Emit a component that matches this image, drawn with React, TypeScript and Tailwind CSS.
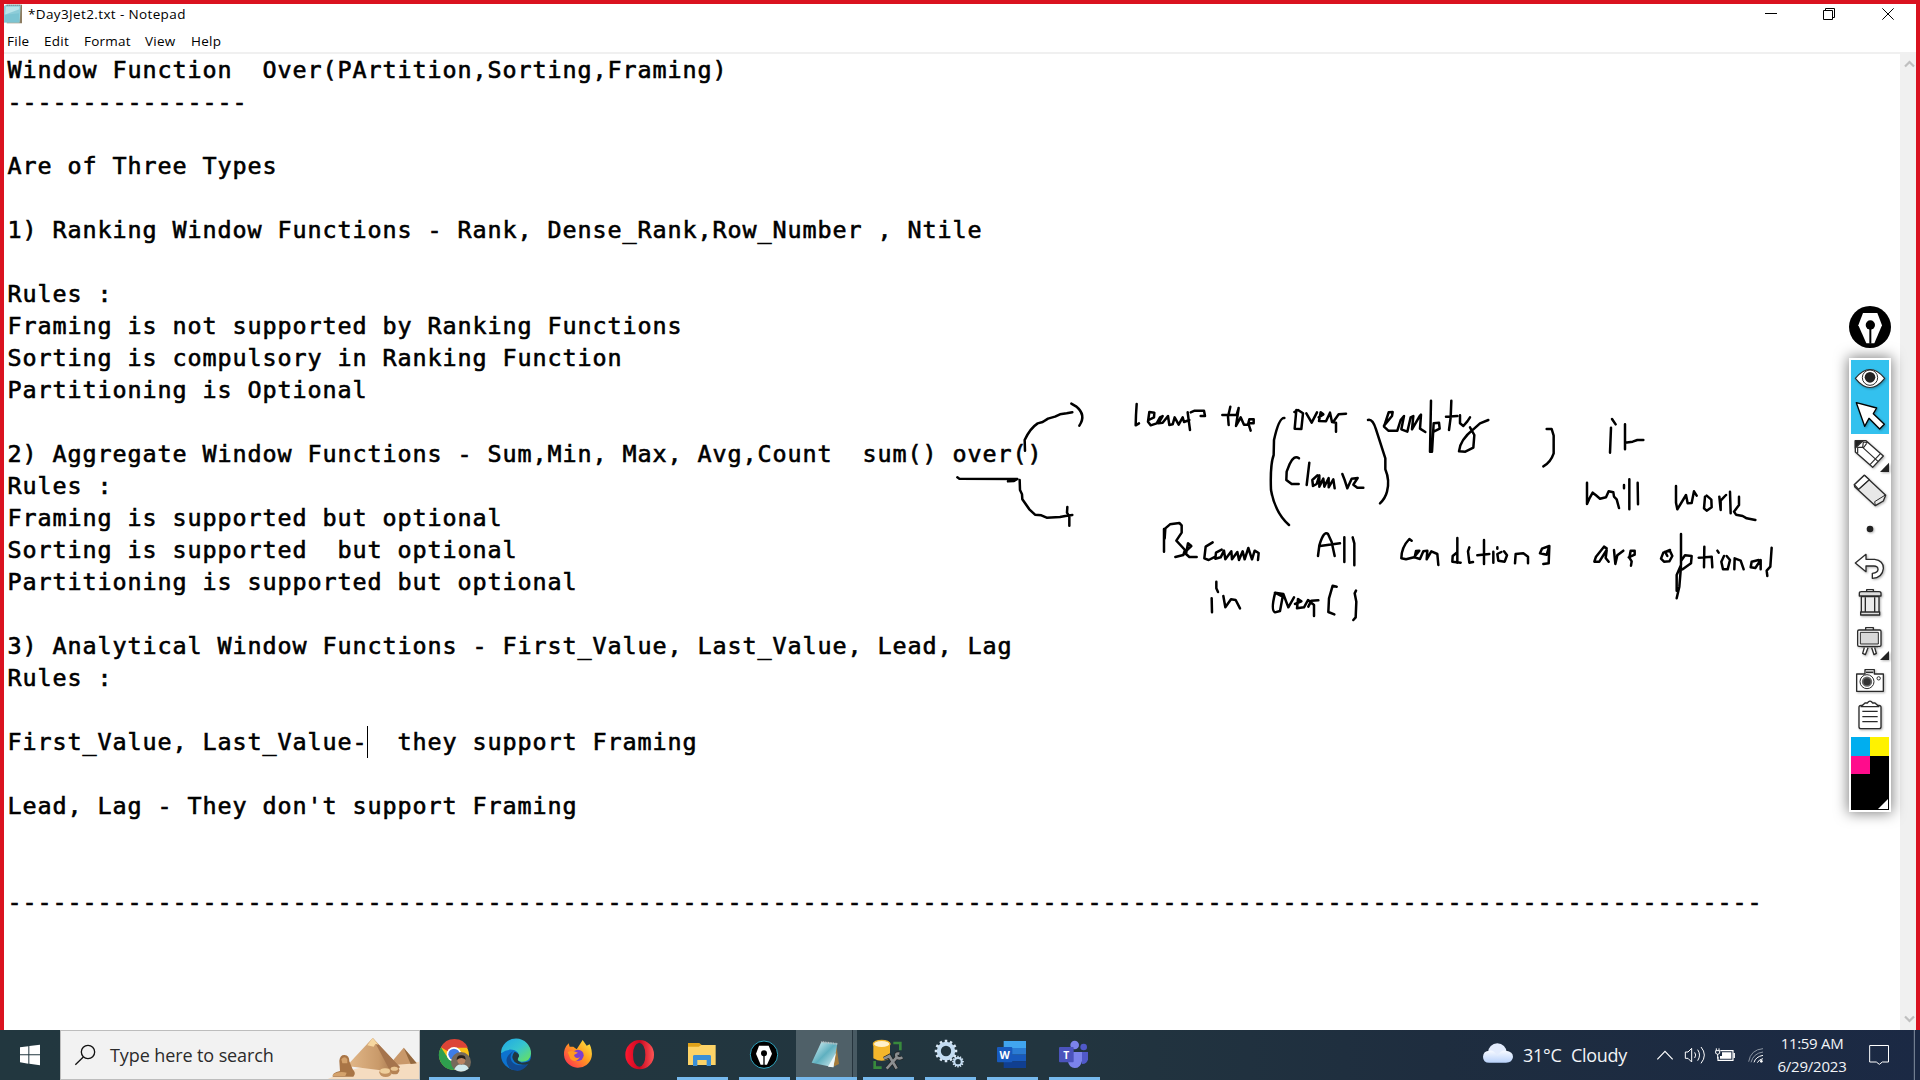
import type { ReactNode } from "react";

const lines = [
  "Window Function  Over(PArtition,Sorting,Framing)",
  "----------------",
  "",
  "Are of Three Types",
  "",
  "1) Ranking Window Functions - Rank, Dense_Rank,Row_Number , Ntile",
  "",
  "Rules :",
  "Framing is not supported by Ranking Functions",
  "Sorting is compulsory in Ranking Function",
  "Partitioning is Optional",
  "",
  "2) Aggregate Window Functions - Sum,Min, Max, Avg,Count  sum() over()",
  "Rules :",
  "Framing is supported but optional",
  "Sorting is supported  but optional",
  "Partitioning is supported but optional",
  "",
  "3) Analytical Window Functions - First_Value, Last_Value, Lead, Lag",
  "Rules :",
  "",
  "First_Value, Last_Value-|  they support Framing",
  "",
  "Lead, Lag - They don't support Framing",
  "",
  "",
  "-".repeat(117),
];

function TitleBar() {
  return (
    <header className="flex h-[26px] shrink-0 items-start bg-white">
      <svg className="h-5 w-[18px] shrink-0" viewBox="12 12 54 60">
        <path d="M22 14h44v56H20z" fill="#8d7d62" />
        <path d="M18 14h44l-3 54H12V18z" fill="#8fd0dc" />
        <path d="M18 20h40l-1 20-42 4z" fill="#b9e4ea" />
        <path d="M14 44l44-16-1 38H13z" fill="#6fbccb" opacity=".6" />
        <path d="M20 16h42" stroke="#777" strokeWidth="4" strokeDasharray="3 3" />
      </svg>
      <span className="ml-[6px] font-['Open_Sans',sans-serif] text-[13.5px] leading-[21px] tracking-[0.37px] text-black">
        *Day3Jet2.txt - Notepad
      </span>
      <svg className="ml-auto h-[26px] w-[158px]" viewBox="174 12 474 78" fill="none" stroke="#000" strokeWidth="3">
        <path d="M195 40.500h36" />
        <path d="M370.500 31.500h27v27h-27zM376.500 31v-5.500h27v27h-5" />
        <path d="M547 25l34 34M581 25l-34 34" />
      </svg>
    </header>
  );
}

function MenuBar() {
  return (
    <nav className="flex h-[24px] shrink-0 border-b-2 border-[#f0f0f0] bg-white pl-[3px] font-['Open_Sans',sans-serif] text-[13.5px] leading-[23px] tracking-[0.25px] text-black">
      <span className="w-[37px]">File</span>
      <span className="w-[40px]">Edit</span>
      <span className="w-[61px]">Format</span>
      <span className="w-[46px]">View</span>
      <span>Help</span>
    </nav>
  );
}

function Document() {
  return (
    <main className="min-w-0 flex-1 overflow-hidden bg-white pl-[3.5px] font-['DejaVu_Sans_Mono',monospace] text-[23.4px] leading-8 tracking-[0.917px] text-black [-webkit-text-stroke:0.6px_#000]">
      {lines.map((line, i) => {
        const [before, after] = line.split("|");
        return (
          <div key={i} className="h-8 whitespace-pre">
            {before}
            {after !== undefined && <span className="-mr-px inline-block h-8 w-px bg-black align-top" />}
            {after}
          </div>
        );
      })}
    </main>
  );
}

function ScrollBar() {
  return (
    <aside className="flex w-4 shrink-0 flex-col justify-between bg-[#f0f0f0] py-[6px]">
      <svg className="h-[9px] w-4" viewBox="0 0 16 9" fill="none" stroke="#bfbfbf" strokeWidth="2.200">
        <path d="M5 6.500l4.500-4.500L14 6.500" />
      </svg>
      <svg className="h-[9px] w-4" viewBox="0 0 16 9" fill="none" stroke="#bfbfbf" strokeWidth="2.200">
        <path d="M5 1.500L9.500 6 14 1.500" />
      </svg>
    </aside>
  );
}

function Ink() {
  return (
    <svg
      className="pointer-events-none absolute left-[940px] top-[380px] h-[260px] w-[860px]"
      viewBox="0 0 2580 780"
      fill="none"
      stroke="#000"
      strokeWidth="7.500"
      strokeLinecap="round"
      strokeLinejoin="round"
    >
      <path d="M255 212L254 180Q270 145 293 130L308 126L324 116L345 110L360 103L380 100L397 97M394 71L408 79Q440 105 418 137" />
      <path d="M52 292L58 296L232 297L222 303L204 304M239 300L240 330L246 343L247 358L268 388L285 404L304 406L320 413L360 411L376 408L397 405M382 381L381 398L388 410V437" />
      <path d="M590 72L588 105L587 136L597 130M626 120L642 112L643 98L628 96L624 125L632 136L650 130L660 112L668 108L655 130L668 128L684 108L688 135L698 133L704 112L716 134L728 112L732 126L748 120M743 97L750 150M752 97L764 92H792L795 108H782" />
      <path d="M871 80L864 110L866 135M847 105L890 104L896 84L888 138L902 112L912 134L924 134L928 118L941 118V130L925 130L932 152" />
      <path d="M1033 114Q1017 112 1002 180L1001 225Q990 255 993 330Q1005 398 1047 435" />
      <path d="M1069 90L1064 146L1084 147L1089 100L1074 90L1063 96M1099 100L1115 128L1131 97M1136 112L1150 103L1142 97L1137 123L1158 124L1170 98L1176 126L1188 128V155M1180 125L1196 103L1218 101" />
      <path d="M1077 235Q1062 224 1049 252L1040 275L1039 300L1055 312H1076M1108 248L1100 315M1132 286L1117 300L1119 318L1130 312L1138 286V320L1150 296L1153 320L1166 294V322L1180 298L1184 325M1207 282L1214 300L1222 325L1235 296L1253 294L1240 314L1252 323H1270" />
      <path d="M672 447V515M674 475L676 445L690 433L718 429L725 436V458L709 482L735 510L730 525L706 531M738 513L754 498L744 490L738 522L748 531H770M818 487L797 500L793 535L806 540L826 530M845 509L828 518L826 536L842 532L852 512L856 538L874 514L876 538L892 516L897 540L908 514L914 538L925 504L936 538L944 512L956 519L954 540" />
      <path d="M1134 528L1138 496Q1152 450 1164 462L1175 486L1184 528M1140 498L1200 490M1213 472V546M1238 472L1243 490V556" />
      <path d="M829 605V625L834 636M815 655L816 697M850 648L856 682L873 658L887 660L900 685" />
      <path d="M1005 640Q992 692 1005 697L1020 693L1028 650L1005 638L1030 642L1045 682L1062 652M1065 672L1084 664L1074 657L1071 685L1092 682L1104 660L1122 675V708M1105 680L1114 662L1135 661M1190 620L1178 617L1167 655L1165 696L1183 703M1248 632L1244 640L1249 665L1247 712L1240 720" />
      <g transform="translate(1200 0)">
        <path d="M84 120Q98 116 108 148L136 235V268Q150 302 141 335Q136 355 120 370" />
        <path d="M132 137L156 108L158 96L146 97L132 140L145 152H172L182 120L192 108L184 148L202 155L212 112L220 108L216 148L238 110L243 104L240 146L256 156M273 62L270 215H276L281 130L297 128L299 146L281 155" />
        <path d="M334 62L332 112L327 150M318 110L352 108M360 106V130L370 138L382 124L390 112M390 142L403 165L400 203L376 215L357 214Q360 180 400 148L420 130L445 120" />
        <path d="M620 147H635L641 167V220Q632 247 610 259M816 117L827 133M813 143L810 218M855 133V208M855 188L878 185L892 180H910" />
        <path d="M741 308V372L748 356L758 338L768 346L780 356L798 352L806 334L820 337L822 350L830 358L837 384M852 315V325M868 298V388M893 308L894 373" />
        <path d="M1008 318V368L1012 388L1038 345L1043 370L1055 369L1062 334L1070 347M1095 350L1092 385L1100 392L1115 382L1114 359L1100 347M1138 350L1142 390V362L1158 345M1170 335L1172 400M1197 350V375L1182 395L1188 404L1208 408L1220 415L1246 420" />
        <path d="M215 482L208 477Q184 502 184 535L198 538L222 532L238 512L228 513L224 532L240 537L250 514L262 512L260 538L274 514L292 522L295 555" />
        <path d="M352 474V548M350 518L338 528L337 545L362 548M388 502L384 514L388 548L399 546M432 480V552M412 526L448 522M460 515V548M472 502V506M484 516L472 522L475 542L494 545L501 526L492 514M525 550L527 522L550 520L564 530V550M628 498L606 506L600 520L620 524L628 498L626 550L610 552" />
        <path d="M800 505L792 500L768 530L763 545L778 545L800 510L797 534L806 545M822 510L826 552L832 526L850 512M866 532L884 524V512L872 512L868 533L875 544L873 557" />
        <path d="M990 510L970 518L963 536L972 545L988 544L997 528L990 513L975 515L982 528M1023 462V555L1010 585V632M1023 560L1018 620L1010 655M1025 540L1035 526L1055 528L1053 550L1028 568" />
        <path d="M1093 500L1092 562M1076 533L1115 530L1117 562M1132 512L1136 518M1152 528L1144 545L1149 568L1163 568L1170 540L1160 528M1183 568L1184 535L1202 542L1211 568M1256 540L1235 545L1232 562L1246 564L1262 540V568M1295 503L1291 560L1280 572L1282 588" />
      </g>
    </svg>
  );
}

function Tool({ box, size, children }: { box: string; size: string; children: ReactNode }) {
  return (
    <svg
      className={`w-[38px] shrink-0 drop-shadow-[1px_1px_1px_rgba(0,0,0,0.3)] ${size}`}
      viewBox={box}
      fill="#fff"
      stroke="#2b2b2b"
      strokeWidth="4"
      strokeLinejoin="round"
    >
      {children}
    </svg>
  );
}

function PenToolbar() {
  return (
    <div className="absolute left-[1849px] top-[306px] flex w-[42px] flex-col">
      <svg className="mb-[10px] h-[42px] w-[42px]" viewBox="0 0 126 126">
        <circle cx="63" cy="63" r="63" fill="#000" />
        <path d="M42 21H85L99 58L76 112H52L28 58z" fill="#fff" />
        <circle cx="64" cy="57" r="14" />
        <path d="M64 57v56" stroke="#000" strokeWidth="6" />
      </svg>
      <div className="flex h-[454px] flex-col bg-white p-[2px] shadow-[0_0_14px_1px_rgba(0,0,0,0.5)]">
        <div className="flex h-[74px] shrink-0 flex-col bg-[#33c1ee]">
          <Tool box="63 210 114 111" size="h-[37px]">
            <path d="M76 265Q120 212 164 265Q120 320 76 265z" strokeWidth="3.500" />
            <circle cx="120" cy="263" r="23" fill="#fff" strokeWidth="3" />
            <circle cx="120" cy="262" r="16" fill="#222" stroke="none" />
          </Tool>
          <Tool box="63 321 114 111" size="h-[37px]">
            <path d="M79 338L140 354L130 371L163 403L149 417L117 385L104 409z" stroke="#000" />
          </Tool>
        </div>
        <Tool box="63 432 114 114" size="h-[38px]">
          <path d="M76 452H108L160 498L128 532L76 486z" />
          <path d="M76 452H99L76 474z" fill="#222" />
          <path d="M83 490V472H98L100 456L115 458M98 472L144 514M152 490L120 524M100 474L110 460" fill="none" strokeWidth="3.500" />
          <path d="M177 518V546H150z" fill="#222" stroke="none" />
        </Tool>
        <Tool box="63 546 114 114" size="h-[38px]">
          <path d="M73 584L103 556L167 616L160 633L136 647L74 590z" fill="#e8e8e8" />
          <path d="M73 584L103 556L118 569L86 598z" fill="#fff" />
          <path d="M86 598L118 569M134 635L136 646M134 635L166 615" strokeWidth="3" />
        </Tool>
        <Tool box="63 660 114 111" size="h-[37px]">
          <circle cx="120" cy="717" r="10" fill="#222" stroke="none" />
        </Tool>
        <Tool box="63 -9 114 111" size="h-[37px]">
          <path d="M76 39L108 13V28H134Q161 32 160 56Q157 84 127 85V70Q145 68 144 57Q143 48 132 48H108V65z" />
        </Tool>
        <Tool box="63 102 114 111" size="h-[37px]">
          <path d="M110 126V119H130V126" />
          <rect x="94" y="140" width="53" height="53" fill="#ececec" />
          <path d="M88 138V130Q88 125 94 125H147Q153 125 153 130V138z" fill="#ddd" />
          <path d="M106 142V184M134 142V184M92 186H149V195H92z" fill="#ddd" />
        </Tool>
        <Tool box="63 213 114 117" size="h-[39px]">
          <path d="M107 240V233H130V240M103 293L98 310L106 314L114 293M125 293L132 314L139 310L134 293M94 290H144" />
          <rect x="83" y="240" width="70" height="49" rx="4" />
          <rect x="91" y="247" width="54" height="35" fill="#d8d8d8" strokeWidth="3" />
          <path d="M177 303V330H150z" fill="#222" stroke="none" />
        </Tool>
        <Tool box="63 330 114 111" size="h-[37px]">
          <path d="M80 372H105V359H133V372H160V424H80z" />
          <path d="M108 367H130" strokeWidth="5" />
          <circle cx="111" cy="395" r="21" strokeWidth="3" />
          <circle cx="111" cy="395" r="13" fill="#333" strokeWidth="5" stroke="#666" />
          <circle cx="146" cy="385" r="5" strokeWidth="3" />
        </Tool>
        <Tool box="63 441 114 120" size="h-[40px]">
          <path d="M93 466H147Q153 466 153 472V530Q153 536 147 536H93Q87 536 87 530V472Q87 466 93 466z" />
          <path d="M93 470L105 459H112Q120 448 128 459H135L147 470z" />
          <path d="M97 484H143M97 500H143M97 515H143" />
        </Tool>
        <div className="relative grid h-[73px] shrink-0 grid-cols-2 grid-rows-[19px_18px_1fr] bg-black">
          <div className="bg-[#00aeef]" />
          <div className="bg-[#fff200]" />
          <div className="bg-[#ff0c8c]" />
          <svg className="absolute bottom-px right-px h-[10px] w-[10px]" viewBox="0 0 10 10">
            <path d="M10 0v10H0z" fill="#fff" />
          </svg>
        </div>
      </div>
    </div>
  );
}

function Slot({ x, bar, active, children }: { x: number; bar?: boolean; active?: boolean; children: ReactNode }) {
  return (
    <div className="relative flex h-[50px] w-[62px] shrink-0">
      {active && (
        <div className="absolute inset-y-0 left-0 flex w-[61px]">
          <div className="w-14 bg-[#4f6068]" />
          <div className="w-px bg-[#26343d]" />
          <div className="w-1 bg-[#485a63]" />
        </div>
      )}
      <svg className="relative h-[50px] w-[62px]" viewBox={`${x} 30 186 150`}>
        {children}
      </svg>
      {bar && <div className={`absolute bottom-0 h-[3px] bg-[#76b9ed] ${active ? "left-0 w-[61px]" : "left-[5px] w-[51px]"}`} />}
    </div>
  );
}

const gearTeeth = [0, 30, 60, 90, 120, 150, 180, 210, 240, 270, 300, 330];

function Gear({ cx, cy, r }: { cx: number; cy: number; r: number }) {
  return (
    <g transform={`translate(${cx} ${cy})`}>
      {gearTeeth.map((a) => (
        <rect key={a} x={-r * 0.14} y={-r * 1.25} width={r * 0.28} height={r * 0.5} fill="#dbe9f6" transform={`rotate(${a})`} />
      ))}
      <circle r={r * 0.8} fill="none" stroke="#c3dcf2" strokeWidth={r * 0.45} />
    </g>
  );
}

function TaskIcons() {
  return (
    <div className="ml-1 flex">
      <Slot x={12} bar>
        <circle cx="102" cy="105" r="45" fill="#fbc116" />
        <path d="M102 105L63 82A45 45 0 0 1 144 83H102z" fill="#dc4437" />
        <path d="M63 82A45 45 0 0 0 102 150L122 115H84z" fill="#2e9f4e" />
        <circle cx="102" cy="103" r="22" fill="#fff" />
        <circle cx="102" cy="103" r="17" fill="#3f7de8" />
        <circle cx="123" cy="126" r="30" fill="#75695c" />
        <path d="M103 148Q110 132 124 134Q140 132 146 146Q124 162 103 148z" fill="#cfe9ee" />
        <circle cx="124" cy="121" r="12" fill="#b98463" />
        <path d="M110 120Q110 105 124 106Q137 105 137 119Q124 108 110 120z" fill="#251f1c" />
      </Slot>
      <Slot x={198}>
        <defs>
          <linearGradient id="edgeTop" x1="0" y1="0" x2="1" y2="1">
            <stop offset="0" stopColor="#1fa6e6" />
            <stop offset=".5" stopColor="#36c5cf" />
            <stop offset="1" stopColor="#6de353" />
          </linearGradient>
        </defs>
        <circle cx="288" cy="105" r="45" fill="#0d73cf" />
        <path d="M243 100A45 45 0 0 1 333 101Q331 125 305 125Q288 124 294 113Q300 98 284 91Q262 84 243 100z" fill="url(#edgeTop)" />
        <path d="M281 92Q266 106 275 124Q288 143 325 132Q300 166 269 145Q245 115 281 92z" fill="#114a92" />
        <path d="M284 95Q304 101 294 115Q290 124 305 128Q330 126 333 116L327 131Q300 140 284 126Q270 110 284 95z" fill="#223740" />
      </Slot>
      <Slot x={384}>
        <defs>
          <linearGradient id="fox" x1="1" y1="0" x2="0" y2="1">
            <stop offset="0" stopColor="#fff044" />
            <stop offset=".45" stopColor="#ff9b20" />
            <stop offset="1" stopColor="#ff1e57" />
          </linearGradient>
        </defs>
        <path d="M432 105Q431 84 446 70L449 80L460 80L470 88L488 60L500 77L509 73Q518 92 515 110A42 42 0 0 1 432 105z" fill="url(#fox)" />
        <circle cx="474" cy="106" r="17" fill="#7b3fd0" />
        <path d="M443 96Q456 89 474 98L462 105Q465 118 480 112Q466 132 451 116z" fill="#ff9a22" />
      </Slot>
      <Slot x={570}>
        <defs>
          <linearGradient id="opera" x1="0" x2="1">
            <stop offset="0" stopColor="#ff1830" />
            <stop offset=".5" stopColor="#c90720" />
            <stop offset="1" stopColor="#ff5555" />
          </linearGradient>
        </defs>
        <path fillRule="evenodd" d="M659 60A43 44 0 1 0 659 148A43 44 0 1 0 659 60M658 68Q676 72 676 104Q676 136 658 140Q639 136 639 104Q639 72 658 68" fill="url(#opera)" />
      </Slot>
      <Slot x={756} bar>
        <path d="M804 69H838L846 76V86H804z" fill="#dfa21a" />
        <path d="M804 80H836L844 75H887V135H804z" fill="#fdd367" />
        <path d="M819 138V109Q819 105 824 105H868Q873 105 873 109V138H860V120H832V138z" fill="#3b8fd6" />
        <path d="M891 171h33v9h-33z" fill="#5389b8" />
      </Slot>
      <Slot x={942} bar>
        <circle cx="1032" cy="104" r="41" fill="#000" stroke="#2fa3bd" strokeWidth="3" />
        <path d="M1017 77H1046L1056 101L1041 134H1022L1008 101z" fill="#fff" />
        <circle cx="1032" cy="100" r="9" />
        <path d="M1032 100V135" stroke="#000" strokeWidth="4" />
      </Slot>
      <Slot x={-12} bar active>
        <defs>
          <linearGradient id="pad" x1="0" y1="0" x2="1" y2="1">
            <stop offset="0" stopColor="#e4f8fa" />
            <stop offset=".5" stopColor="#5fb0c0" />
            <stop offset="1" stopColor="#e2f2f4" />
          </linearGradient>
        </defs>
        <path d="M108 70L117 132L100 140z" fill="#a57b3b" />
        <path d="M64 66L112 70L100 142L35 128z" fill="url(#pad)" />
        <path d="M84 140L108 98L100 142z" fill="#eef7f8" />
        <path d="M64 66L112 72" stroke="#b9c1c4" strokeWidth="6" strokeDasharray="3 2" />
      </Slot>
      <Slot x={174} bar>
        <path d="M220 72V115Q245 130 270 115V72z" fill="#f4b62c" />
        <ellipse cx="245" cy="72" rx="25" ry="11" fill="#fff0cc" stroke="#f4b62c" strokeWidth="4" />
        <path d="M280 69H301V91M224 123V143H245" fill="none" stroke="#388a3c" strokeWidth="8" />
        <path d="M252 116L268 108L290 146M260 146L290 112Q285 98 298 101M290 112Q300 118 307 112" fill="none" stroke="#222" strokeWidth="12" />
        <path d="M252 116L268 108L290 146M260 146L290 112Q285 98 298 101M290 112Q300 118 307 112" fill="none" stroke="#8c8f91" strokeWidth="8" />
      </Slot>
      <Slot x={360} bar>
        <Gear cx={438} cy={93} r={27} />
        <Gear cx={474} cy={125} r={14} />
      </Slot>
      <Slot x={546} bar>
        <path d="M611 63H678V84H611z" fill="#41a5ee" />
        <path d="M611 84H678V104H611z" fill="#2b7cd3" />
        <path d="M611 104H678V124H611z" fill="#185abd" />
        <path d="M611 124H678V144H611z" fill="#103f91" />
        <rect x="591" y="81" width="46" height="46" rx="3" fill="#185abd" />
        <text x="614" y="116" textAnchor="middle" fontFamily="Open Sans, sans-serif" fontWeight="700" fontSize="32" fill="#fff">W</text>
      </Slot>
      <Slot x={732} bar>
        <circle cx="851" cy="81" r="10" fill="#5059c9" />
        <path d="M840 96H864V118Q862 132 846 132z" fill="#5059c9" />
        <circle cx="824" cy="75" r="13" fill="#7b83eb" />
        <path d="M805 96H846V122Q842 144 824 144Q808 143 804 125z" fill="#7b83eb" />
        <rect x="777" y="81" width="44" height="46" rx="3" fill="#4b53bc" />
        <text x="799" y="116" textAnchor="middle" fontFamily="Open Sans, sans-serif" fontWeight="700" fontSize="31" fill="#fff">T</text>
      </Slot>
    </div>
  );
}

function SearchBox() {
  return (
    <div className="flex h-[50px] w-[360px] shrink-0 items-center overflow-hidden border border-[#bdbdbd] bg-[#f2f2f2]">
      <svg className="h-12 w-[49px] shrink-0" viewBox="183 33 147 144" fill="none" stroke="#111" strokeWidth="4">
        <circle cx="264" cy="96" r="20" />
        <path d="M250 111L226 134" />
      </svg>
      <span className="w-[215px] whitespace-nowrap font-['Open_Sans',sans-serif] text-[18px] tracking-[-0.1px] text-[#2b2b2b]">
        Type here to search
      </span>
      <svg className="h-12 w-[94px] shrink-0" viewBox="975 33 282 144">
        <defs>
          <linearGradient id="stone" x1="0" x2="1">
            <stop offset="0" stopColor="#e3b98a" />
            <stop offset=".6" stopColor="#c99a6a" />
            <stop offset="1" stopColor="#9a6a45" />
          </linearGradient>
        </defs>
        <path d="M978 180Q1040 145 1110 140T1260 125V180z" fill="#f5dcc0" />
        <path d="M1211 83L1250 130L1190 134L1178 122z" fill="#c9986a" />
        <path d="M1211 83L1250 130L1232 132z" fill="#94683f" />
        <path d="M1118 54L1200 142L1160 153L1040 138z" fill="url(#stone)" />
        <path d="M1118 54L1200 142L1170 152z" fill="#a5744d" />
        <path d="M1118 54L1136 74L1126 72L1121 80L1102 76z" fill="#f6d7a0" />
        <path d="M1018 122Q1020 104 1034 105Q1048 106 1048 124L1058 148Q1070 160 1060 170H998Q996 158 1020 153z" fill="#a97546" />
        <path d="M1024 118Q1034 106 1042 118V130H1027zM1000 162Q1020 152 1040 158L1036 168H998z" fill="#d4a26c" />
        <ellipse cx="1157" cy="157" rx="19" ry="14" fill="#c29160" />
        <ellipse cx="1155" cy="153" rx="15" ry="8" fill="#efcf9c" />
        <ellipse cx="1184" cy="151" rx="14" ry="12" fill="#b58253" />
        <ellipse cx="1183" cy="146" rx="11" ry="6" fill="#e9c592" />
      </svg>
    </div>
  );
}

function Tray() {
  return (
    <div className="ml-auto flex h-[50px] font-['Open_Sans',sans-serif] text-[#f2f4f7]">
      <svg className="h-[50px] w-[40px]" viewBox="60 90 120 150">
        <defs>
          <linearGradient id="cloud" x1="0" y1="0" x2="0" y2="1">
            <stop offset="0" stopColor="#f7faff" />
            <stop offset="1" stopColor="#b9d2fb" />
          </linearGradient>
        </defs>
        <circle cx="112" cy="158" r="28" fill="#e3ecfd" />
        <path d="M88 188Q69 188 69 170Q70 152 88 152Q102 150 112 168Q122 150 138 152Q159 154 159 171Q157 188 138 188z" fill="url(#cloud)" />
      </svg>
      <span className="ml-[3px] w-[48px] whitespace-nowrap text-[18px] leading-[50px] tracking-[-0.3px]">31°C</span>
      <span className="w-[79px] whitespace-nowrap text-[18px] leading-[50px] tracking-[-0.3px]">Cloudy</span>
      <svg className="h-[50px] w-[120px]" viewBox="570 90 360 150" fill="none" stroke="#fff" strokeWidth="3.500">
        <path d="M592 178L615 154L638 178" />
        <path d="M676 156H684L695 145V186L684 175H676zM704 157Q710 165 704 174M713 149Q724 165 713 182M723 141Q743 165 723 190" strokeWidth="3" />
        <path d="M781 152H819V181H774V170M823 159V174" />
        <path d="M786 157H814V176H780V168H786z" fill="#fff" stroke="none" />
        <path d="M767 152H779V160Q773 166 767 160zM769 145V152M777 145V152M773 162V176" strokeWidth="3" />
        <path d="M866 185Q872 149 909 146M873 187Q880 160 909 156" stroke="#8d96a3" strokeWidth="3" />
        <path d="M882 187Q887 170 909 166M892 188Q897 178 909 176" strokeWidth="3" />
        <circle cx="904" cy="184" r="4" fill="#fff" stroke="none" />
      </svg>
      <div className="flex w-[88px] flex-col items-center pt-[2px] text-[15px] leading-[23px] tracking-[-0.3px]">
        <span className="-translate-x-[2px]">11:59 AM</span>
        <span className="-translate-x-[2px] tracking-[-0.2px]">6/29/2023</span>
      </div>
      <svg className="h-[50px] w-[62px]" viewBox="1194 90 186 150" fill="none" stroke="#fff" strokeWidth="3">
        <path d="M1229 136.500H1285.500V186H1267L1258 193L1249 186H1229z" />
        <path d="M1363 90V240" stroke="#8490a0" />
      </svg>
    </div>
  );
}

export default function App() {
  return (
    <div className="relative flex h-[1080px] w-[1920px] flex-col overflow-hidden bg-white">
      <section className="flex h-[1030px] shrink-0 flex-col border-x-4 border-t-4 border-[#da1220]">
        <TitleBar />
        <MenuBar />
        <div className="flex min-h-0 flex-1">
          <Document />
          <ScrollBar />
        </div>
      </section>
      <footer className="flex h-[50px] shrink-0 bg-[linear-gradient(90deg,#22373f_0%,#22353f_55%,#1e2d3f_75%,#1b2944_100%)]">
        <svg className="h-[50px] w-[60px] shrink-0" viewBox="0 30 180 150" fill="#fff">
          <path d="M60 82L85 79V103H60zM88 78L120 74V103H88zM60 106H85V131L60 127zM88 106H120V136L88 131z" />
        </svg>
        <SearchBox />
        <TaskIcons />
        <Tray />
      </footer>
      <Ink />
      <PenToolbar />
    </div>
  );
}
